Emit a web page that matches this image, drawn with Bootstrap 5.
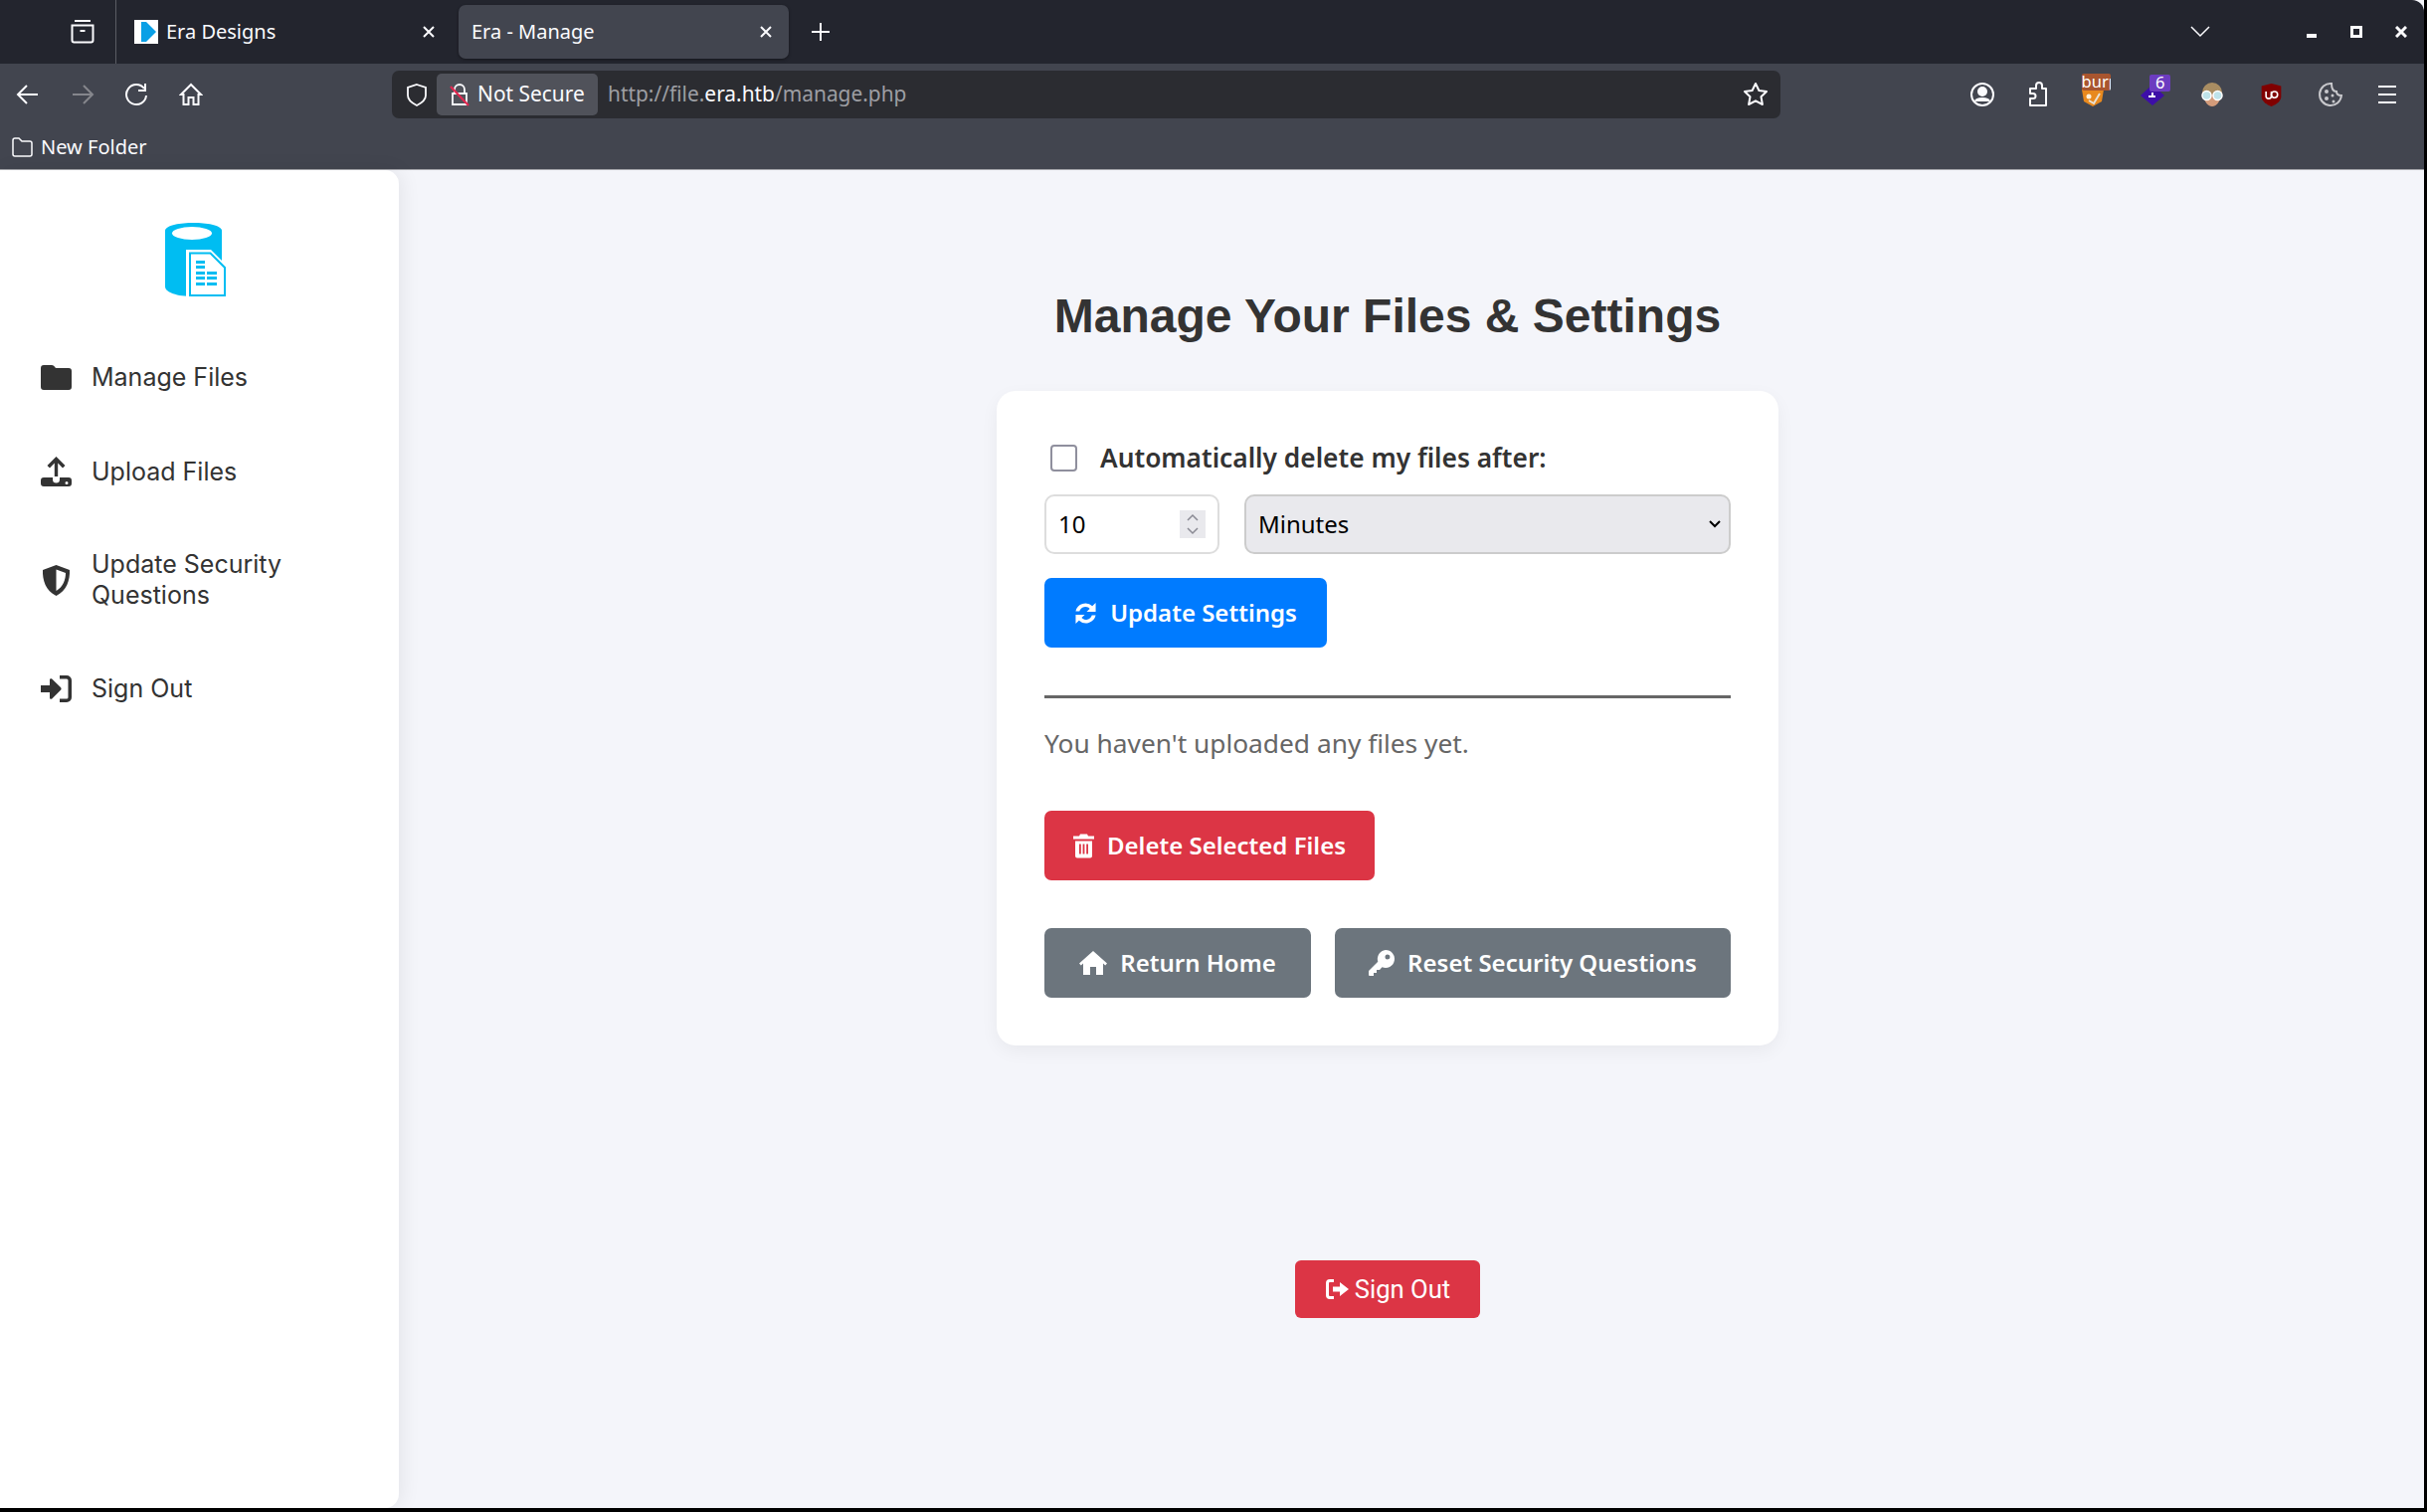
<!doctype html>
<html lang="en">

<head>
    <meta charset="utf-8" />
    <title>Era - Manage</title>
    <link href="https://cdn.jsdelivr.net/npm/bootstrap@5.3.0/dist/css/bootstrap.min.css" rel="stylesheet" />
    <style>
        html, body { height: 100%; }
        body { background: #000; overflow: hidden; font-family: "Noto Sans", sans-serif; }
        .app-window { height: 1516px; width: 2437px; background: #f4f5fa; }

        /* browser chrome */
        .tab-strip { height: 64px; background: #23252e; color: #fbfbfe; font-size: 20px; border-top-right-radius: 12px; }
        .tab-tools { width: 117px; height: 64px; border-right: 1px solid #5a5c64; padding-left: 70px; }
        .tab-item { width: 332px; height: 54px; padding: 0 16px 0 13px; margin-right: 7px; border-radius: 7px; }
        .tab-first { margin-left: 5px; padding-left: 13px; }
        .tab-active { background: #42454f; box-shadow: 0 1px 3px rgba(0, 0, 0, .4); }
        .tab-fav { width: 24px; height: 24px; background: #fff; margin-right: 8px; }
        .tab-title { flex-grow: 1; white-space: nowrap; }
        .tab-plus { margin-left: 15px; }
        .window-btns { width: 218px; margin-right: 17px; }
        .win-min { margin-left: 97px; }
        .win-max { margin-left: 34px; }
        .win-close { margin-left: 33px; }
        .tool-row { height: 62px; background: #42454f; color: #fbfbfe; padding-left: 1px; padding-right: 10px; }
        .url-box { width: 1396px; height: 48px; background: #2b2c31; border-radius: 7px; margin-left: 175px; padding: 0 12px 0 14px; font-size: 20.900px; }
        .site-pill { width: 162px; height: 42px; margin-left: 9px; background: #50525a; border-radius: 5px; padding-left: 13px; white-space: nowrap; }
        .url-text { color: #9d9ea3; margin-left: 10px; }
        .url-text b { color: #fbfbfe; font-weight: 400; }
        .tool-btn { width: 54.500px; }
        .ext-btn { width: 59.600px; position: relative; }
        .ext-badge { position: absolute; top: -8px; height: 17px; font-size: 16.500px; line-height: 16px; color: #fff; border-radius: 2px; text-align: center; }
        .badge-burp { left: 18px; width: 29px; background: #a9552f; overflow: hidden; }
        .badge-six { left: 27px; width: 21px; background: #6c3cc0; }
        .mark-row { height: 45px; background: #42454f; color: #fbfbfe; font-size: 20px; border-bottom: 1px solid #a7a8ad; padding-left: 12px; }

        /* page */
        .page-wrap { height: 1345px; }
        .side-panel { width: 401px; flex-shrink: 0; background: #fff; border-radius: 0 14px 14px 0; box-shadow: 3px 0 20px rgba(0, 0, 0, .07); padding-top: 53px; font-family: Inter, sans-serif; }
        .side-logo { display: block; margin: 0 0 49px 166px; width: 61px; height: 75px; }
        .side-link { display: flex; align-items: center; min-height: 62px; color: #333; font-size: 25px; line-height: 31px; padding: 14px 41px; margin-bottom: 33px; text-decoration: none; }
        .side-link svg { width: 31px; height: 31px; flex-shrink: 0; margin-right: 20px; fill: #333; }
        .main-area { flex-grow: 1; padding: 0 48px 0 0; }
        .page-title { font-family: "Liberation Sans", sans-serif; font-weight: 700; font-size: 48px; line-height: 62px; color: #333; margin: 116px 0 44px; text-align: center; }
        .files-box { width: 786px; height: 658px; background: #fff; border-radius: 19px; box-shadow: 0 6px 18px rgba(0, 0, 0, .05); padding: 48px; font-size: 26.300px; }
        .auto-row { height: 40px; margin-bottom: 16px; }
        .auto-row .form-check-input { width: 27px; height: 27px; margin: 0 23px 2px 6px; border: 2px solid #8f8f9d; border-radius: 4px; }
        .auto-row label { font-weight: 600; color: #333; }
        .field-row { gap: 25px; }
        .num-field { width: 176px; height: 60px; font-size: 24px; border-radius: 10px; padding: 0 12px; color: #000; border: 2px solid #ddd; position: relative; background: #fff; }
        .num-spin { position: absolute; right: 12px; top: 14px; width: 26px; height: 28px; background: #e9e9ed; }
        .unit-select { width: 489px; height: 60px; font-size: 24px; border-radius: 10px; padding: 0 12px; color: #000; border: 2px solid #ccc; background-color: #e9e9ed; background-image: url("data:image/svg+xml,%3csvg xmlns='http://www.w3.org/2000/svg' viewBox='0 0 12 8'%3e%3cpath fill='none' stroke='%23000' stroke-width='2' d='M1 1l5 5 5-5'/%3e%3c/svg%3e"); background-size: 12px 8px; background-position: right 8px center; }
        .act-btn { height: 70px; font-size: 24px; font-weight: 600; border-radius: 7px; border: 0; color: #fff; display: inline-flex; align-items: center; justify-content: center; white-space: nowrap; padding: 0; }
        .act-btn svg { fill: #fff; margin-right: 13px; }
        .btn-update { width: 284px; background: #007bff; margin-top: 24px; }
        .btn-remove { width: 332px; background: #dc3545; }
        .btn-home { width: 268px; background: #6c757d; }
        .btn-reset { width: 398px; background: #6c757d; }
        .files-rule { height: 3px; background: #666; opacity: 1; border: 0; margin: 48px 0 0; }
        .empty-note { color: #666; line-height: 38px; margin: 26px 0 49px; }
        .act-row { margin-top: 48px; gap: 24px; }
        .out-btn { width: 186px; height: 58px; background: #dc3545; color: #fff; border: 0; border-radius: 6px; font-family: Roboto, sans-serif; font-size: 25.600px; margin-top: 216px; display: inline-flex; align-items: center; justify-content: center; }
        .out-btn svg { fill: #fff; margin-right: 6px; }
    </style>
</head>

<body>
    <div class="app-window d-flex flex-column">
        <div class="tab-strip d-flex align-items-center">
            <div class="tab-tools d-flex align-items-center">
                <svg width="26" height="26" viewBox="0 0 26 26" fill="none" stroke="#fbfbfe" stroke-width="2"><path d="M5 2h16M2.500 6.500h21v15a2 2 0 0 1-2 2h-17a2 2 0 0 1-2-2z" /><path d="M10.500 12h5" /></svg>
            </div>
            <div class="tab-item tab-first d-flex align-items-center">
                <div class="tab-fav d-flex align-items-center justify-content-center">
                    <svg width="24" height="24" viewBox="0 0 24 24"><path d="M7 2h5l10 10-10 10H7z" fill="#0aa0e6" /></svg>
                </div>
                <div class="tab-title">Era Designs</div>
                <svg width="14" height="14" viewBox="0 0 14 14" stroke="#fbfbfe" stroke-width="2"><path d="M2 2l10 10M12 2L2 12" /></svg>
            </div>
            <div class="tab-item tab-active d-flex align-items-center">
                <div class="tab-title">Era - Manage</div>
                <svg width="14" height="14" viewBox="0 0 14 14" stroke="#fbfbfe" stroke-width="2"><path d="M2 2l10 10M12 2L2 12" /></svg>
            </div>
            <svg class="tab-plus" width="20" height="20" viewBox="0 0 20 20" stroke="#fbfbfe" stroke-width="2"><path d="M10 1v18M1 10h18" /></svg>
            <div class="flex-grow-1"></div>
            <div class="window-btns d-flex align-items-center">
                <svg width="20" height="12" viewBox="0 0 20 12" fill="none" stroke="#fbfbfe" stroke-width="1.500"><path d="M1 1l9 9 9-9" /></svg>
                <svg class="win-min" width="10" height="12" viewBox="0 0 10 12" fill="#fbfbfe"><rect x="0" y="8" width="10" height="4" /></svg>
                <svg class="win-max" width="12" height="12" viewBox="0 0 12 12" fill="none" stroke="#fbfbfe" stroke-width="3"><rect x="1.500" y="1.500" width="9" height="9" /></svg>
                <svg class="win-close" width="12" height="12" viewBox="0 0 12 12" stroke="#fbfbfe" stroke-width="3"><path d="M1 1l10 10M11 1L1 11" /></svg>
            </div>
        </div>

        <div class="tool-row d-flex align-items-center">
            <div class="tool-btn d-flex justify-content-center"><svg width="24" height="24" viewBox="0 0 24 24" fill="none" stroke="#fbfbfe" stroke-width="2"><path d="M22 12H3M11 3l-9 9 9 9" /></svg></div>
            <div class="tool-btn d-flex justify-content-center"><svg width="24" height="24" viewBox="0 0 24 24" fill="none" stroke="#85868c" stroke-width="2"><path d="M2 12h19M13 3l9 9-9 9" /></svg></div>
            <div class="tool-btn d-flex justify-content-center"><svg width="24" height="24" viewBox="0 0 24 24" fill="none" stroke="#fbfbfe" stroke-width="2"><path d="M20 6a10 10 0 1 0 2 7" /><path d="M21 1v7h-7" /></svg></div>
            <div class="tool-btn d-flex justify-content-center"><svg width="24" height="24" viewBox="0 0 24 24" fill="none" stroke="#fbfbfe" stroke-width="2"><path d="M2 12L12 2l10 10-2.500 0V22h-5v-7h-5v7h-5V12z" /></svg></div>
            <div class="url-box d-flex align-items-center">
                <svg width="22" height="24" viewBox="0 0 22 24" fill="none" stroke="#fbfbfe" stroke-width="1.800"><path d="M11 2l9 3v8c0 5-5 8-9 10-4-2-9-5-9-10V5z" /></svg>
                <div class="site-pill d-flex align-items-center">
                    <svg class="me-2" width="20" height="24" viewBox="0 0 20 24" fill="none" stroke="#fbfbfe" stroke-width="1.800"><path d="M5 11V7a5 5 0 0 1 10 0v4M3 11h14v11H3z" /><path d="M1 4l18 19" stroke="#e22850" stroke-width="2.200" /></svg>
                    <span>Not Secure</span>
                </div>
                <div class="url-text flex-grow-1">http://file.<b>era.htb</b>/manage.php</div>
                <svg width="26" height="26" viewBox="0 0 26 26" fill="none" stroke="#fbfbfe" stroke-width="2" stroke-linejoin="round"><path d="M13 2l3.400 7 7.600 1-5.500 5.300 1.400 7.700-6.900-3.700L6.100 23l1.400-7.700L2 10l7.600-1z" /></svg>
            </div>
            <div class="flex-grow-1"></div>
            <div class="tool-btn d-flex justify-content-center"><svg width="26" height="26" viewBox="0 0 26 26" fill="none" stroke="#fbfbfe" stroke-width="2"><circle cx="13" cy="13" r="11" /><circle cx="13" cy="10" r="4" fill="#fbfbfe" /><path d="M6 20c1-4 13-4 14 0" fill="#fbfbfe" /></svg></div>
            <div class="tool-btn d-flex justify-content-center"><svg width="24" height="26" viewBox="0 0 24 26" fill="none" stroke="#fbfbfe" stroke-width="2" stroke-linejoin="round"><path d="M9 7h3V4a3 3 0 0 1 6 0v3h4v17H6v-7h3a2.500 2.500 0 0 0 0-5H6V7z" /></svg></div>
            <div class="ext-btn d-flex justify-content-center">
                <svg width="24" height="26" viewBox="0 0 24 26"><path d="M1 8l22 0-2 12-9 5-9-5z" fill="#e8891e" /><circle cx="8" cy="15" r="2.500" fill="#fff2dc" /><path d="M8 19l5 3 6-10" stroke="#e9e2d6" stroke-width="2" fill="none" /></svg>
                <div class="ext-badge badge-burp">burp</div>
            </div>
            <div class="ext-btn d-flex justify-content-center">
                <svg width="24" height="24" viewBox="0 0 24 24"><path d="M12 2l12 11-12 10L0 13z" fill="#3d0ea8" /><path d="M8 14h7M12 10v4" stroke="#fff" stroke-width="2" /></svg>
                <div class="ext-badge badge-six">6</div>
            </div>
            <div class="ext-btn d-flex justify-content-center">
                <svg width="24" height="24" viewBox="0 0 24 24"><circle cx="12" cy="10" r="10" fill="#a98d62" /><path d="M3 12c1 8 5 12 9 12s8-4 9-12z" fill="#d39b7a" /><circle cx="6.500" cy="13" r="4.500" fill="#bfe3ea" stroke="#fff" stroke-width="1.500" /><circle cx="17.500" cy="13" r="4.500" fill="#bfe3ea" stroke="#fff" stroke-width="1.500" /></svg>
            </div>
            <div class="ext-btn d-flex justify-content-center">
                <svg width="23" height="25" viewBox="0 0 24 28"><path d="M12 1l11 3v12c0 5-6 9-11 11C7 25 1 21 1 16V4z" fill="#800000" /><path d="M6 10v5a3 3 0 0 0 6 0v-5" stroke="#fff" stroke-width="1.800" fill="none" /><circle cx="15.500" cy="13.500" r="3.500" stroke="#fff" stroke-width="1.800" fill="none" /></svg>
            </div>
            <div class="ext-btn d-flex justify-content-center">
                <svg width="26" height="26" viewBox="0 0 26 26" fill="none" stroke="#c8c8cc" stroke-width="2"><path d="M14 2a11 11 0 1 0 10 12c-3 0-5-1-5-4-3 0-5-3-5-8z" /><g fill="#c8c8cc" stroke="none"><circle cx="9" cy="10" r="2" /><circle cx="15" cy="14" r="1.500" /><circle cx="9" cy="17" r="2" /><circle cx="16" cy="20" r="1.500" /></g></svg>
            </div>
            <div class="tool-btn d-flex justify-content-center"><svg width="24" height="22" viewBox="0 0 24 22" stroke="#fbfbfe" stroke-width="2"><path d="M3 3h18M3 11h18M3 19h18" /></svg></div>
        </div>
        <div class="mark-row d-flex align-items-center">
            <svg class="me-2" width="21" height="20" viewBox="0 0 21 20" fill="none" stroke="#fbfbfe" stroke-width="1.500"><path d="M1 3a2 2 0 0 1 2-2h4l3 3h8a2 2 0 0 1 2 2v11a2 2 0 0 1-2 2H3a2 2 0 0 1-2-2z" /></svg>
            <span>New Folder</span>
        </div>

        <div class="page-wrap d-flex">
            <div class="side-panel">
                <svg class="side-logo" viewBox="0 0 61 75">
                    <path d="M0 8C0-2.700 57-2.700 57 8v66H28C12 74 0 70 0 64z" fill="#00bdf2" />
                    <ellipse cx="27" cy="10.500" rx="20" ry="6.500" fill="#fff" />
                    <path d="M21 27h25l15 15v32H21z" fill="#fff" />
                    <path d="M25 30.500h20.500L60 45v28H25z" fill="none" stroke="#00bdf2" stroke-width="2" />
                    <g fill="#00bdf2"><rect x="31" y="38" width="9" height="3" /><rect x="31" y="43" width="9" height="3" /><rect x="31" y="49" width="9" height="3" /><rect x="42" y="49" width="10" height="3" /><rect x="31" y="54" width="9" height="3" /><rect x="42" y="54" width="10" height="3" /><rect x="31" y="60" width="9" height="3" /><rect x="42" y="60" width="10" height="3" /></g>
                </svg>
                <a class="side-link" href="#"><svg viewBox="0 0 31 31"><path d="M0 6a3 3 0 0 1 3-3h8c1.500 0 2 .8 3 1.800L15 6h13a3 3 0 0 1 3 3v16a3 3 0 0 1-3 3H3a3 3 0 0 1-3-3z" /></svg>Manage Files</a>
                <a class="side-link" href="#"><svg viewBox="0 0 31 31"><path d="M15.500 0l9 9-2.500 2.400-4.800-4.800V20h-3.400V6.600L9 11.400 6.500 9z" /><path d="M3 21h9v2a3.500 3.500 0 0 0 7 0v-2h9a3 3 0 0 1 3 3v3a3 3 0 0 1-3 3H3a3 3 0 0 1-3-3v-3a3 3 0 0 1 3-3zm23 4a1.500 1.500 0 1 0 0 3 1.500 1.500 0 0 0 0-3z" fill-rule="evenodd" /></svg>Upload Files</a>
                <a class="side-link" href="#"><svg viewBox="0 0 31 31"><path d="M15.500 0L29 5c.5 10-3 21-13.500 26C5 26 1.500 15 2 5zm0 4.500V26c7-4 9.500-11.500 9.500-18z" fill-rule="evenodd" /></svg>Update Security Questions</a>
                <a class="side-link" href="#"><svg viewBox="0 0 31 31"><path d="M0 12h9V6.500c0-1.200 1.300-1.800 2.200-1L20 14c.8.800.8 2 0 2.800l-8.800 8.600c-.9.900-2.200.3-2.200-1V19H0z" /><path d="M19 2h7a5 5 0 0 1 5 5v17a5 5 0 0 1-5 5h-7v-3.500h7a1.500 1.500 0 0 0 1.500-1.500V7A1.500 1.500 0 0 0 26 5.500h-7z" /></svg>Sign Out</a>
            </div>

            <div class="main-area d-flex flex-column align-items-center">
                <h1 class="page-title">Manage Your Files &amp; Settings</h1>
                <div class="files-box">
                    <div class="auto-row d-flex align-items-center form-check p-0">
                        <input class="form-check-input" type="checkbox" id="auto-del" />
                        <label for="auto-del">Automatically delete my files after:</label>
                    </div>
                    <div class="d-flex field-row">
                        <div class="num-field d-flex align-items-center">10
                            <div class="num-spin d-flex align-items-center justify-content-center">
                                <svg width="14" height="24" viewBox="0 0 14 24" fill="none" stroke="#8a8a94" stroke-width="1.500"><path d="M2 8l5-5 5 5M2 16l5 5 5-5" /></svg>
                            </div>
                        </div>
                        <select class="form-select unit-select">
                            <option>Minutes</option>
                        </select>
                    </div>
                    <button class="btn act-btn btn-update">
                        <svg width="23" height="23" viewBox="0 0 24 24"><path d="M22.500 1v9.500H13l3.300-3.300A6.500 6.500 0 0 0 5.500 9.800H1.500A10.500 10.500 0 0 1 19 4.500zM1.500 23v-9.500H11l-3.300 3.300a6.500 6.500 0 0 0 10.800-2.600h4A10.500 10.500 0 0 1 5 19.500z" /></svg>
                        Update Settings
                    </button>
                    <hr class="files-rule" />
                    <p class="empty-note">You haven't uploaded any files yet.</p>
                    <button class="btn act-btn btn-remove">
                        <svg width="21" height="25" viewBox="0 0 21 24"><path d="M7 0h7l1 2h6v3H0V2h6zM2 7h17v15a2 2 0 0 1-2 2H4a2 2 0 0 1-2-2zm4 3v10h1.800V10zm3.600 0v10h1.800V10zm3.600 0v10H15V10z" fill-rule="evenodd" /></svg>
                        Delete Selected Files
                    </button>
                    <div class="d-flex act-row">
                        <button class="btn act-btn btn-home">
                            <svg width="28" height="24" viewBox="0 0 28 24"><path d="M14 0l14 12.500-1.800 2L24 12.600V24h-7v-8h-6v8H4V12.600l-2.200 1.900-1.800-2z" /></svg>
                            Return Home
                        </button>
                        <button class="btn act-btn btn-reset">
                            <svg width="26" height="26" viewBox="0 0 26 26"><path d="M17 0a9 9 0 1 1-3.500 17.300L11 20H8v3H5v3H1a1 1 0 0 1-1-1v-4l9.300-9.300A9 9 0 0 1 17 0zm2 4.500a2.500 2.500 0 1 0 0 5 2.500 2.500 0 0 0 0-5z" fill-rule="evenodd" /></svg>
                            Reset Security Questions
                        </button>
                    </div>
                </div>
                <button class="btn out-btn">
                    <svg width="24" height="24" viewBox="0 0 24 24"><path d="M9 2H5a4 4 0 0 0-4 4v12a4 4 0 0 0 4 4h4v-3H5a1 1 0 0 1-1-1V6a1 1 0 0 1 1-1h4z" /><path d="M8 9.500h7V5l9 7-9 7v-4.500H8z" /></svg>
                    Sign Out
                </button>
            </div>
        </div>
    </div>

    <script src="https://cdn.jsdelivr.net/npm/bootstrap@5.3.0/dist/js/bootstrap.bundle.min.js"></script>
</body>

</html>
